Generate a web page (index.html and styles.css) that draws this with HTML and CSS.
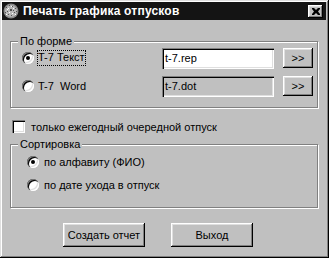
FILE: index.html
```html
<!DOCTYPE html>
<html>
<head>
<meta charset="utf-8">
<link rel="stylesheet" href="styles.css">
</head>
<body>
<div class="window">
  <div class="titlebar">
    <svg class="appicon" width="16" height="16" viewBox="0 0 16 16">
      <circle cx="8" cy="8" r="7.5" fill="#8a8a8a"/>
      <circle cx="8" cy="8" r="6" fill="#b8b8b8"/>
      <g fill="#505050">
        <rect x="3" y="4" width="1" height="1"/><rect x="6" y="2" width="1" height="1"/><rect x="9" y="3" width="1" height="1"/>
        <rect x="12" y="5" width="1" height="1"/><rect x="4" y="8" width="1" height="1"/><rect x="7" y="6" width="2" height="2"/>
        <rect x="11" y="9" width="1" height="1"/><rect x="5" y="11" width="1" height="1"/><rect x="8" y="12" width="1" height="1"/>
        <rect x="10" y="7" width="1" height="1"/><rect x="2" y="9" width="1" height="1"/><rect x="13" y="8" width="1" height="1"/>
      </g>
      <g fill="#ffffff">
        <rect x="5" y="5" width="1" height="1"/><rect x="10" y="5" width="1" height="1"/><rect x="6" y="9" width="1" height="1"/>
        <rect x="9" y="10" width="1" height="1"/><rect x="4" y="6" width="1" height="1"/><rect x="12" y="11" width="1" height="1"/>
        <rect x="8" y="3" width="1" height="1"/><rect x="3" y="11" width="1" height="1"/>
      </g>
    </svg>
    <span class="title">Печать графика отпусков</span>
    <div class="closebtn">
      <svg width="8" height="7" viewBox="0 0 8 7"><path d="M0 0h2l2 2 2-2h2v1l-2 2.5 2 2.5v1h-2l-2-2-2 2h-2v-1l2-2.5-2-2.5z" fill="#000"/></svg>
    </div>
  </div>

  <div class="content">
    <div class="group group-form">
      <div class="legend">По форме</div>
      <div class="row">
        <div class="choice">
          <span class="radio checked"></span>
          <span class="focus">T-7 Текст</span>
        </div>
        <div class="field">t-7.rep</div>
        <div class="btn small">&gt;&gt;</div>
      </div>
      <div class="row">
        <div class="choice">
          <span class="radio"></span>
          <span class="nofocus">T-7 &nbsp;Word</span>
        </div>
        <div class="field disabled">t-7.dot</div>
        <div class="btn small">&gt;&gt;</div>
      </div>
    </div>

    <div class="checkrow">
      <span class="checkbox"></span>
      <span>только ежегодный очередной отпуск</span>
    </div>

    <div class="group group-sort">
      <div class="legend">Сортировка</div>
      <div class="sortrow">
        <span class="radio checked"></span>
        <span>по алфавиту (ФИО)</span>
      </div>
      <div class="sortrow">
        <span class="radio"></span>
        <span>по дате ухода в отпуск</span>
      </div>
    </div>

    <div class="buttons">
      <div class="btn big">Создать отчет</div>
      <div class="btn big">Выход</div>
    </div>
  </div>
</div>
</body>
</html>
```

FILE: styles.css
```css
* { box-sizing: border-box; }
html, body { margin: 0; padding: 0; }
body {
  width: 329px;
  height: 258px;
  overflow: hidden;
  font-family: "Liberation Sans", Arial, sans-serif;
  font-size: 11px;
  color: #000;
}
.window {
  width: 329px;
  height: 258px;
  background: #c0c0c0;
  padding: 2px;
  box-shadow: inset -1px -1px #000, inset 1px 1px #dfdfdf, inset -2px -2px #808080, inset 2px 2px #fff;
}
.titlebar {
  height: 18px;
  margin-right: 1px;
  background: #141414;
  display: flex;
  align-items: center;
  padding: 0 3px 0 1px;
}
.appicon { flex: none; }
.title {
  margin-left: 4px;
  color: #fff;
  font-weight: bold;
  font-size: 12px;
  letter-spacing: 0.2px;
  flex: 1;
  white-space: nowrap;
}
.closebtn {
  width: 15px;
  height: 13px;
  background: #c0c0c0;
  display: flex;
  align-items: center;
  justify-content: center;
  box-shadow: inset -1px -1px #000, inset 1px 1px #fff, inset -2px -2px #808080, inset 2px 2px #dfdfdf;
}
.content {
  padding-left: 8px;
}
.group {
  width: 308px;
  border: 1px solid #808080;
  box-shadow: 1px 1px 0 #fff, inset 1px 1px 0 #fff;
}
.legend {
  width: fit-content;
  background: #c0c0c0;
  margin: -7px 0 0 7px;
  padding: 0 2px 0 2px;
  line-height: 13px;
  height: 13px;
}
.group-form {
  margin-top: 21px;
  height: 67px;
}
.row {
  display: flex;
  align-items: center;
  height: 20px;
  margin-top: 0;
}
.group-form .row:first-of-type { margin-top: -3px; }
.row + .row { margin-top: 8px; }
.choice {
  width: 151px;
  display: flex;
  align-items: center;
  padding-left: 11px;
}
.radio {
  flex: none;
  width: 12px;
  height: 12px;
  border-radius: 50%;
  background: #fff;
  box-shadow: inset 1px 1px #808080, inset 2px 2px #000, inset -1px -1px #fff, inset -2px -2px #dfdfdf;
  display: flex;
  align-items: center;
  justify-content: center;
}
.radio.checked::after {
  content: "";
  width: 4px;
  height: 4px;
  border-radius: 50%;
  background: #000;
}
.focus {
  margin-left: 3px;
  padding: 1px 1px 2px 1px;
  outline: 1px dotted #000;
  outline-offset: -1px;
  line-height: 13px;
}
.nofocus {
  margin-left: 4px;
  line-height: 13px;
}
.field {
  width: 112px;
  height: 21px;
  background: #fff;
  padding: 4px 0 0 3px;
  line-height: 13px;
  box-shadow: inset 1px 1px #808080, inset 2px 2px #000, inset -1px -1px #fff, inset -2px -2px #dfdfdf;
}
.field.disabled { background: #c0c0c0; }
.btn {
  background: #c0c0c0;
  display: flex;
  align-items: center;
  justify-content: center;
  box-shadow: inset -1px -1px #000, inset 1px 1px #fff, inset -2px -2px #808080, inset 2px 2px #dfdfdf;
}
.btn.small {
  width: 30px;
  height: 20px;
  margin-left: 9px;
  font-size: 11px;
}
.checkrow {
  margin-top: 12px;
  height: 13px;
  display: flex;
  align-items: center;
  margin-left: 2px;
}
.checkbox {
  width: 13px;
  height: 13px;
  background: #fff;
  margin-right: 6px;
  box-shadow: inset 1px 1px #808080, inset 2px 2px #000, inset -1px -1px #fff, inset -2px -2px #dfdfdf;
}
.group-sort {
  margin-top: 11px;
  height: 64px;
}
.sortrow {
  display: flex;
  align-items: center;
  height: 16px;
  padding-left: 16px;
  gap: 5px;
}
.group-sort .legend + .sortrow { margin-top: 3px; }
.sortrow + .sortrow { margin-top: 7px; }
.buttons {
  margin-top: 15px;
  display: flex;
  gap: 26px;
  padding-left: 53px;
}
.btn.big {
  width: 82px;
  height: 24px;
  font-size: 11px;
}
```
